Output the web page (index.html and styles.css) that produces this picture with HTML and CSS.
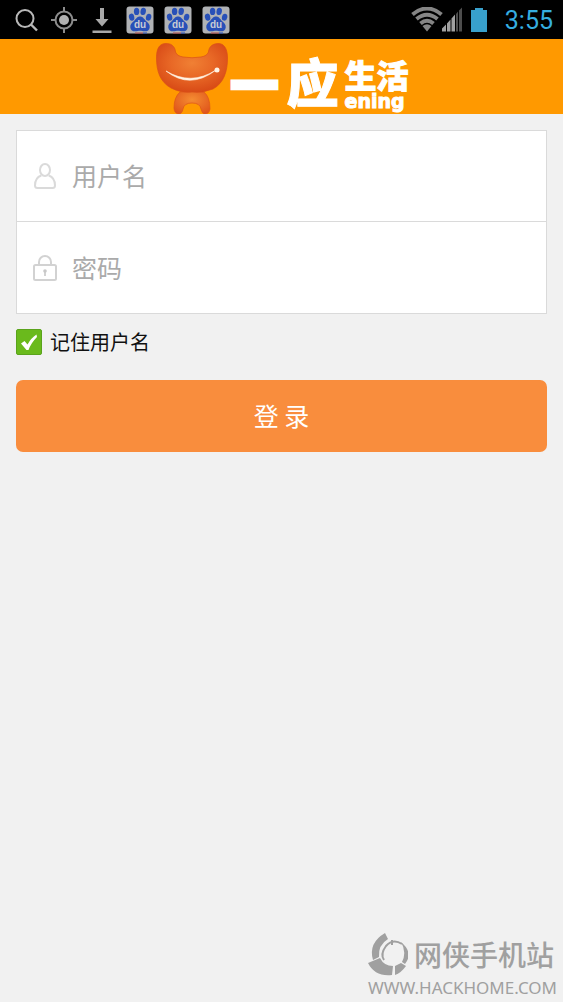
FILE: index.html
```html
<!DOCTYPE html>
<html lang="zh-CN">
<head>
<meta charset="utf-8">
<meta name="viewport" content="width=device-width, initial-scale=1">
<title>一应生活</title>
<link rel="stylesheet" href="styles.css">
</head>
<body>
<svg class="defs" aria-hidden="true">
  <defs>
    <symbol id="paw" viewBox="0 0 28 28">
      <rect x="0.5" y="0.5" width="27" height="27" rx="3" fill="#b0b2b5"/>
      <g fill="#2850b8">
        <ellipse cx="5.6" cy="11.2" rx="2.7" ry="3.6" transform="rotate(-12 5.6 11.2)"/>
        <ellipse cx="10.6" cy="5.4" rx="2.7" ry="3.7"/>
        <ellipse cx="17.2" cy="5.4" rx="2.7" ry="3.7" transform="rotate(10 17.2 5.4)"/>
        <ellipse cx="22.6" cy="11.2" rx="2.7" ry="3.5" transform="rotate(12 22.6 11.2)"/>
        <path d="M14 10.600c3 0 4 2.400 6 4.400 2.500 2.300 4 3.600 3.700 6.400-.3 3-2.500 4-5 3.900-2-.1-3-.5-4.700-.5s-2.700.4-4.700.5c-2.500.1-4.700-.9-5-3.900-.3-2.800 1.200-4.100 3.700-6.400 2-2 3-4.400 6-4.400z"/>
      </g>
      <path d="M9 27h8" stroke="#b44a4a"/>
      <path d="M17 27h4" stroke="#2850b8"/>
      <text class="paw-text" x="14" y="22" text-anchor="middle">du</text>
    </symbol>
  </defs>
</svg>

<div class="status-bar">
  <div class="status-group status-left">
    <svg class="status-icon" viewBox="0 0 28 28" fill="none" stroke="#b8b8b8" stroke-width="2">
      <circle cx="13" cy="12.500" r="8.500"/><path d="M19 18.500l6 6" stroke-width="2.400"/>
    </svg>
    <svg class="status-icon" viewBox="0 0 28 28" fill="none" stroke="#8c8c8c" stroke-width="2">
      <circle cx="14" cy="14" r="8.500"/><path d="M14 1v5M14 22v5M1 14h5M22 14h5"/><circle cx="14" cy="14" r="5" fill="#b0b0b0" stroke="none"/>
    </svg>
    <svg class="status-icon" viewBox="0 0 28 28" fill="#a8a8a8">
      <path d="M12 2h4v11h4.500L14 20.500 7.500 13H12zM4.500 24.500h19v2.500h-19z"/>
    </svg>
    <svg class="status-icon"><use href="#paw"/></svg>
    <svg class="status-icon"><use href="#paw"/></svg>
    <svg class="status-icon"><use href="#paw"/></svg>
  </div>
  <div class="status-group status-right">
    <svg class="signal-icon" viewBox="0 0 54 26">
      <g fill="none" stroke="#858585" stroke-width="4">
        <path d="M1.500 7.500Q16-4.500 30.500 7.500"/><path d="M5.500 12Q16 3.500 26.500 12"/><path d="M9.500 16.500Q16 11 22.500 16.500"/>
      </g>
      <path d="M16 24.500l-4.500-5.500Q16 15.500 20.500 19z" fill="#858585"/>
      <path d="M31 24.500v-3l4-4v7zM36 24.500v-8l3.500-4v12zM40.500 24.500v-13l3.500-4v17z" fill="#a0a0a0"/>
      <path d="M45 24.500V7l2-2.500v20zM48 24.500V3.500l3-3v24z" fill="#4d4d4d"/>
    </svg>
    <svg class="battery-icon" viewBox="0 0 16 26"><path d="M4 1h8v2h4v22H0V3h4z" fill="#38a0cc"/></svg>
    <time class="clock">3:55</time>
  </div>
</div>

<header class="header">
  <svg class="mascot" viewBox="0 0 76 74" aria-hidden="true">
    <defs>
      <radialGradient id="head" cx=".5" cy=".4" r=".6"><stop offset="0" stop-color="#f08034"/><stop offset=".5" stop-color="#e86826"/><stop offset="1" stop-color="#d84a16"/></radialGradient>
      <radialGradient id="legs" cx=".5" cy=".4" r=".65"><stop offset="0" stop-color="#f58c32"/><stop offset="1" stop-color="#e0561c"/></radialGradient>
    </defs>
    <path d="M26 52Q38 48 50 52Q56 57 56 69Q55 74 51 74Q48 74 47 69Q46 63 38 63Q30 63 29 69Q28 74 24.500 74Q20 73 20 68Q20 57 26 52Z" fill="url(#legs)" stroke="#dc5518" stroke-width=".7"/>
    <path d="M11 3.500C17 3 21 6 21.500 12Q23 16 29 17Q38 18.500 47 17Q53 16 54.500 12C55 6 59 3.500 65 3.500C71 4 73.500 10 73.500 18C73.500 31 70 43 59 49Q48 53.500 38 52Q28 53.500 17 48C6 42 2.500 31 2.500 18C2.500 9 5 4 11 3.500Z" fill="url(#head)" stroke="#d85018" stroke-width=".7"/>
    <path d="M12 31Q36 50 62 30Q37 46 12 31Z" fill="#fff4e4" stroke="#fff4e4" stroke-width=".6" stroke-linejoin="round"/>
    <circle cx="63" cy="30" r="2.500" fill="#fff4e4"/>
  </svg>
  <h1 class="brand">
    <span class="brand-one">一</span>
    <span class="brand-ying">应</span>
    <span class="brand-side"><span class="brand-life">生活</span><span class="brand-latin">ening</span></span>
  </h1>
</header>

<main class="main">
  <form class="login">
    <div class="fields">
      <div class="field">
        <svg class="field-icon" viewBox="0 0 24 28" fill="none" stroke="#dadada" stroke-width="2"><ellipse cx="12" cy="8" rx="5" ry="6"/><path d="M8.300 13.500C4 15 2 18.500 2 23.500Q2 26 4.500 26h15Q22 26 22 23.500C22 18.500 20 15 15.700 13.500"/></svg>
        <input class="input" type="text" placeholder="用户名" aria-label="用户名">
      </div>
      <div class="field">
        <svg class="field-icon" viewBox="0 0 24 28" fill="none" stroke="#d2d2d2" stroke-width="2"><rect x="1" y="11" width="22" height="15" rx="1.500"/><path d="M6 11V8a6 6 0 0 1 12 0v3M12 18v4"/><circle cx="12" cy="17" r="1.800" fill="#c8c8c8" stroke="none"/></svg>
        <input class="input" type="password" placeholder="密码" aria-label="密码">
      </div>
    </div>
    <label class="remember">
      <input class="check" type="checkbox" checked>
      <svg class="check-mark" viewBox="0 0 26 26" aria-hidden="true"><path d="M5 14.500L8.500 12l3 3.500Q15 9 20.500 5.500L21 8Q15 14 12.500 21h-2z" fill="#fff"/></svg>
      <span>记住用户名</span>
    </label>
    <button class="submit" type="button">登 录</button>
  </form>
</main>

<footer class="source">
  <div class="source-top">
    <svg class="source-logo" viewBox="0 0 40 44" aria-hidden="true">
      <g fill="#a0a0a0">
        <path d="M17 1L20 7Q10 13 11 25L5 28Q0 11 17 1Z"/>
        <path d="M0 31L12 26Q16 34 25 34L24 43Q7 45 0 31Z"/>
        <path d="M27 34L33 31L38 34Q33 41 27 43Z"/>
        <path d="M33 10Q46 21 37 32L34 30Q39 20 33 10Z"/>
      </g>
      <path d="M34 12Q25 6 18 14Q12 22 16 28" fill="none" stroke="#a0a0a0" stroke-width="2"/>
      <path d="M24 8v5" stroke="#a0a0a0" stroke-width="2"/>
    </svg>
    <span class="source-name">网侠手机站</span>
  </div>
  <div class="source-url">WWW.HACKHOME.COM</div>
</footer>
</body>
</html>
```

FILE: styles.css
```css
* {
  box-sizing: border-box;
}

body {
  display: flex;
  flex-direction: column;
  min-height: 100vh;
  margin: 0;
  background: #f1f1f1;
  color: #111;
  font-family: "Noto Sans CJK SC", sans-serif;
}

.defs {
  position: absolute;
  width: 0;
  height: 0;
}

.status-bar {
  display: flex;
  justify-content: space-between;
  align-items: center;
  height: 39px;
  padding: 0 10px 0 12px;
  background: #000;
}

.status-group {
  display: flex;
  align-items: center;
}

.status-left {
  gap: 10px;
}

.status-icon {
  width: 28px;
  height: 28px;
}

.paw-text {
  fill: #c8ccd4;
  font: bold 10px "Liberation Sans", sans-serif;
}

.signal-icon {
  width: 54px;
  height: 26px;
  margin-right: 6px;
}

.battery-icon {
  width: 16px;
  height: 26px;
  margin-right: 18px;
}

.clock {
  padding-top: 2px;
  color: #35aee0;
  font: 25px/37px Roboto, sans-serif;
}

.header {
  display: flex;
  justify-content: center;
  align-items: center;
  height: 75px;
  background: #ff9900;
}

.mascot {
  width: 76px;
  height: 74px;
}

.brand {
  display: flex;
  align-items: center;
  margin: 0;
  color: #fff;
  font-weight: 900;
  white-space: nowrap;
}

.brand-one {
  padding-top: 10px;
  font-size: 48px;
  line-height: 64px;
  -webkit-text-stroke: 3px #fff;
}

.brand-ying {
  margin: 8px 6px 0 8px;
  font-size: 52px;
  line-height: 56px;
  -webkit-text-stroke: 1px #fff;
}

.brand-side {
  display: flex;
  flex-direction: column;
  gap: 2px;
  padding-top: 14px;
}

.brand-life {
  font-size: 32px;
  line-height: 32px;
  -webkit-text-stroke: 1px #fff;
}

.brand-latin {
  font: bold 19px/18px "DejaVu Sans", sans-serif;
  -webkit-text-stroke: 1px #fff;
}

.main {
  padding: 16px;
}

.login {
  display: flex;
  flex-direction: column;
}

.fields {
  border: 1px solid #dadada;
  background: #fff;
}

.field {
  display: flex;
  align-items: center;
  gap: 15px;
  height: 90px;
  padding: 0 16px;
}

.field + .field {
  height: 92px;
  border-top: 1px solid #dadada;
}

.field-icon {
  flex: none;
  width: 24px;
  height: 28px;
}

.input {
  flex: 1;
  min-width: 0;
  height: 100%;
  padding: 0 0 2px;
  border: 0;
  outline: 0;
  background: none;
  color: #333;
  font: 25px "Noto Sans CJK SC", sans-serif;
}

.input::placeholder {
  color: #aaa;
  opacity: 1;
}

.remember {
  display: grid;
  grid-template-columns: 26px 1fr;
  align-items: center;
  gap: 8px;
  margin: 14px 0 24px;
  font-size: 20px;
  line-height: 28px;
}

.check,
.check-mark {
  grid-area: 1 / 1;
  width: 26px;
  height: 26px;
  margin: 0;
}

.check {
  appearance: none;
  border: 1px solid #5aa31c;
  border-radius: 2px;
  background: #6aba1c;
}

.check:not(:checked) {
  background: #fff;
}

.check-mark {
  pointer-events: none;
}

.submit {
  height: 72px;
  padding: 0 0 3px;
  border: 0;
  border-radius: 7px;
  background: #f98d3d;
  color: #fff;
  font: 25px "Noto Sans CJK SC", sans-serif;
}

.source {
  align-self: flex-end;
  margin-top: auto;
  padding: 0 6px 2px 0;
  color: #a0a0a0;
}

.source-top {
  display: flex;
  align-items: center;
  gap: 6px;
}

.source-logo {
  width: 40px;
  height: 44px;
}

.source-name {
  font-size: 28px;
  font-weight: 500;
  line-height: 44px;
}

.source-url {
  font: 17px/24px "Noto Sans", sans-serif;
}
```
